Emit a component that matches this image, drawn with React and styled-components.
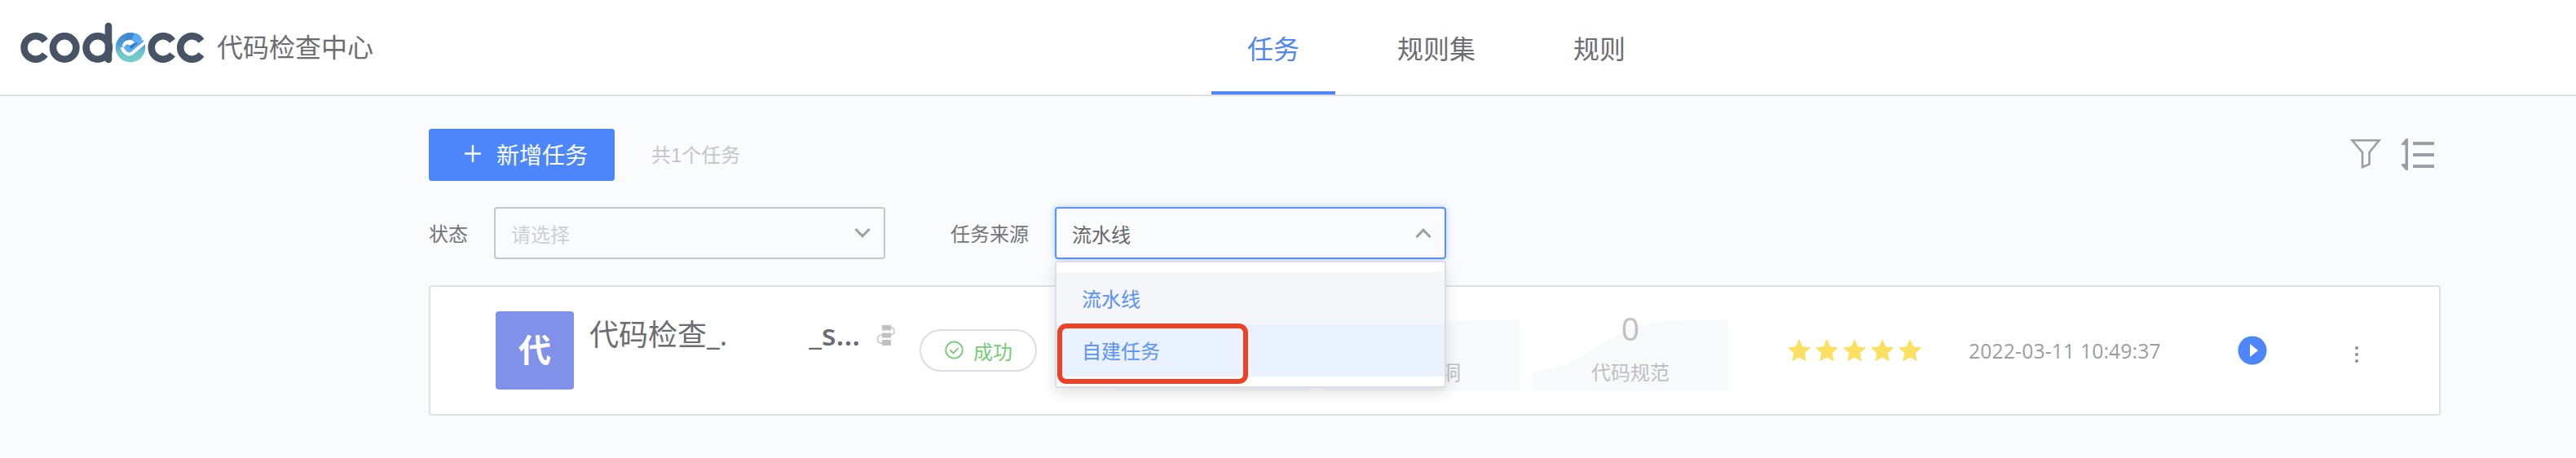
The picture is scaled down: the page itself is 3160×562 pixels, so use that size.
import React from "react";
import styled, { createGlobalStyle } from "styled-components";

const Global = createGlobalStyle`
  * { box-sizing: border-box; }
  body {
    margin: 0;
    background: #fafbfd;
    color: #737479;
    font-family: "Liberation Sans", "Noto Sans CJK SC", sans-serif;
    font-size: 24px;
  }
  svg { display: block; flex: none; }
`;

const latin = `"Open Sans", "Noto Sans CJK SC", sans-serif`;

const Page = styled.div`
  height: 562px;
  overflow: hidden;
`;

const Header = styled.header`
  display: grid;
  grid-template-columns: 1486px auto;
  height: 118px;
  background: #fff;
  border-bottom: 2px solid #dfe0e6;
`;

const Brand = styled.div`
  display: flex;
  align-items: center;
  gap: 16px;
  padding-left: 24px;

  > svg { margin-bottom: 10px; }
`;

const BrandName = styled.span`
  padding-top: 2px;
  font-size: 32px;
  line-height: 48px;
  color: #6c6d73;
`;

const Tabs = styled.nav`
  display: flex;
  gap: 32px;
`;

const Tab = styled.a`
  height: 116px;
  padding: 0 44px;
  font-size: 32px;
  line-height: 122px;
  color: ${(p) => (p.$active ? "#4d86fb" : "#6c6d73")};
  box-shadow: ${(p) => (p.$active ? "inset 0 -4px #4d86fb" : "none")};
`;

const Content = styled.main`
  width: 2468px;
  margin-left: 526px;
  padding-top: 40px;
`;

const Toolbar = styled.div`
  display: flex;
  align-items: center;
  height: 64px;
`;

const AddButton = styled.button`
  display: flex;
  align-items: center;
  gap: 19px;
  width: 228px;
  height: 64px;
  padding: 0 0 2px 44px;
  border: 0;
  border-radius: 4px;
  background: #4d86fb;
  color: #fff;
  font-family: inherit;
  font-size: 28px;
`;

const Total = styled.span`
  margin-left: 45px;
  padding-bottom: 3px;
  color: #c4c5ca;
`;

const ToolIcons = styled.div`
  display: flex;
  gap: 24px;
  margin-left: auto;
  padding-right: 7px;
`;

const Filters = styled.div`
  display: flex;
  align-items: center;
  height: 64px;
  margin-top: 32px;
`;

const Label = styled.label`
  width: ${(p) => p.$width}px;
  margin-left: ${(p) => p.$offset || 0}px;
  padding-top: 3px;
  line-height: 36px;
`;

const SelectBox = styled.div`
  position: relative;
  display: flex;
  align-items: center;
  justify-content: space-between;
  width: 480px;
  height: 64px;
  padding: 0 16px 0 19px;
  border: 2px solid ${(p) => (p.$open ? "#5a91fc" : "#c4c6cc")};
  border-radius: 4px;
  box-shadow: ${(p) => (p.$open ? "0 0 8px rgba(77, 134, 251, 0.4)" : "none")};
  color: ${(p) => (p.$placeholder ? "#c8d1da" : "#66686f")};
`;

const Menu = styled.ul`
  position: absolute;
  z-index: 2;
  top: 64px;
  left: -2px;
  width: 480px;
  height: 156px;
  margin: 0;
  padding: 12px 0;
  list-style: none;
  background: #fff;
  border: 2px solid #dcdee5;
  border-radius: 4px;
  box-shadow: 0 6px 18px rgba(0, 0, 0, 0.13);
`;

const Option = styled.li`
  height: 64px;
  padding-left: 31px;
  line-height: 67px;
  color: #5a91fb;
  background: ${(p) => (p.$hover ? "#eaf2ff" : "#f4f6fa")};
`;

const Marker = styled.div`
  position: absolute;
  top: 75px;
  left: 1px;
  width: 234px;
  height: 74px;
  border: 6px solid #ee4126;
  border-radius: 11px;
`;

const Card = styled.section`
  display: flex;
  align-items: center;
  height: 160px;
  margin-top: 32px;
  padding-left: 80px;
  background: #fff;
  border: 2px solid #dfe0e6;
  border-radius: 4px;
`;

const Avatar = styled.div`
  width: 96px;
  height: 96px;
  border-radius: 4px;
  background: #8091ea;
  color: #fff;
  font-size: 40px;
  font-weight: 700;
  line-height: 97px;
  text-align: center;
`;

const TaskName = styled.div`
  display: flex;
  align-items: baseline;
  width: 352px;
  height: 96px;
  padding-left: 19px;
  font-family: ${latin};
  font-size: 36px;
  line-height: 58px;
  color: #6c6d73;
`;

const NameTail = styled.span`
  margin-left: 100px;
`;

const NameSuffix = styled.span`
  font-weight: 600;
`;

const SourceIcon = styled.div`
  height: 96px;
  width: 72px;
  padding: 15px 0 0 19px;
`;

const Status = styled.div`
  display: flex;
  align-items: center;
  gap: 12px;
  width: 144px;
  height: 52px;
  margin-right: 96px;
  padding-left: 29px;
  border: 2px solid #dcdee5;
  border-radius: 26px;
  color: #74cd74;
`;

const Metrics = styled.div`
  display: flex;
  gap: 16px;
`;

const Metric = styled.div`
  display: grid;
  width: 240px;
  height: 100px;
  text-align: center;
  color: #bfbfc2;

  > * { grid-area: 1 / 1; }
  > svg { align-self: end; }
`;

const MetricText = styled.div`
  z-index: 1;
`;

const MetricValue = styled.div`
  height: 60px;
  font-family: ${latin};
  font-size: 39px;
  line-height: 46px;
`;

const MetricLabel = styled.div`
  line-height: 36px;
`;

const Stars = styled.div`
  display: flex;
  gap: 6px;
  margin-left: 73px;
`;

const Time = styled.time`
  width: 330px;
  margin-left: 58px;
  font-family: ${latin};
  font-size: 24.6px;
  letter-spacing: 0.2px;
  white-space: nowrap;
  color: #9c9da1;
`;

const More = styled.div`
  margin-left: 107px;
  padding-top: 9px;
`;

const Chevron = ({ up }) => (
  <svg width="20" height="14" viewBox="0 0 20 14" fill="none" stroke="#9c9ea5" strokeWidth="3">
    <path d={up ? "M1.5 12 10 3.2 18.5 12" : "M1.5 2 10 10.8 18.5 2"} />
  </svg>
);

const Logo = () => (
  <svg width="226" height="54" viewBox="24 26 226 54" fill="none" role="img" aria-label="codecc">
    <defs>
      <linearGradient id="ring" x1="0" y1="0" x2="0" y2="1">
        <stop offset="0" stopColor="#4189cf" />
        <stop offset=".4" stopColor="#4b9ddb" />
        <stop offset=".65" stopColor="#6cc4cb" />
        <stop offset="1" stopColor="#7bd0cd" />
      </linearGradient>
    </defs>
    <g stroke="#465465" strokeWidth="8.6">
      <path d="M55.300 50.2A14.2 14.2 0 1 0 55.300 66.8" />
      <circle cx="79.2" cy="58.5" r="14.2" />
      <circle cx="119.8" cy="58.5" r="14.2" />
      <path d="M133 32V73" strokeLinecap="round" />
      <path d="M211.5 50.2A14.2 14.2 0 1 0 211.5 66.8" />
      <path d="M247 50.2A14.2 14.2 0 1 0 247 66.8" />
    </g>
    <circle cx="160" cy="58.3" r="18.2" fill="url(#ring)" />
    <path fill="#fff" d="M180 46 174 50 159 64 150 56Q152 48 161 48.5L170 47V40H180Z" />
    <path fill="#4189cf" d="M157 41 168 42 166 51Q161 47 155 50L152 44Z" />
    <path fill="#58abf8" d="M165 41Q170 41 173.5 46Q175 49 172 52L161 63Q159 65 157 63L152 57.5 156 54 159.5 56 165 52 161.5 49Z" />
    <path d="M160 57 168 53 161 58.5Z" stroke="#347abf" strokeWidth="2" fill="#347abf" />
    <path d="M149.5 58 151 61.5Q156.5 69.5 162.5 65L180 50" stroke="#fff" strokeWidth="4" />
  </svg>
);

const Curve = () => (
  <svg width="240" height="88" viewBox="0 0 240 88">
    <path fill="#f7f9fb" d="M0 65Q24 61 46 53Q58 48 76 35L108 17Q140 0 200 0H240V88H0Z" />
  </svg>
);

const metrics = [
  { name: "代码缺陷", value: "0" },
  { name: "安全漏洞", value: "0" },
  { name: "代码规范", value: "0" },
];

export default function App() {
  return (
    <Page>
      <Global />
      <Header>
        <Brand>
          <Logo />
          <BrandName>代码检查中心</BrandName>
        </Brand>
        <Tabs>
          <Tab $active>任务</Tab>
          <Tab>规则集</Tab>
          <Tab>规则</Tab>
        </Tabs>
      </Header>
      <Content>
        <Toolbar>
          <AddButton>
            <svg width="20" height="22" viewBox="0 0 20 22" stroke="#fff" strokeWidth="2.4">
              <path d="M10 0V21M0 10.5H20" />
            </svg>
            新增任务
          </AddButton>
          <Total>共1个任务</Total>
          <ToolIcons>
            <svg width="38" height="40" viewBox="0 0 38 40" fill="none" stroke="#9c9ea5" strokeWidth="2.6">
              <path d="M2.5 2.3H35.5L23.5 17V31.5L15 35V17Z" />
            </svg>
            <svg width="42" height="40" viewBox="0 0 42 40">
              <path fill="#9c9ea5" d="M9 0V39H6.5L1 33V31H5.5V8H1V6.5L6.5 0ZM15 4H41V8H15ZM15 18H41V22H15ZM15 32H41V36H15Z" />
            </svg>
          </ToolIcons>
        </Toolbar>
        <Filters>
          <Label $width={80}>状态</Label>
          <SelectBox $placeholder>
            请选择
            <Chevron />
          </SelectBox>
          <Label $width={128} $offset={80}>任务来源</Label>
          <SelectBox $open>
            流水线
            <Chevron up />
            <Menu>
              <Option>流水线</Option>
              <Option $hover>自建任务</Option>
              <Marker />
            </Menu>
          </SelectBox>
        </Filters>
        <Card>
          <Avatar>代</Avatar>
          <TaskName>
            代码检查_.
            <NameTail>_</NameTail>
            <NameSuffix>s...</NameSuffix>
          </TaskName>
          <SourceIcon>
            <svg width="24" height="28" viewBox="0 0 24 28" fill="none" stroke="#cfd0d5" strokeWidth="1.8">
              <path d="M16 5H18Q22 5 22 9.5T17 14H6Q1.5 14 1.5 19T6 24H8" />
              <path fill="#c0c1c7" stroke="none" d="M7 2H18V8.500H7ZM7 11.500H18V17.500H7ZM7 20H18V27H7Z" />
            </svg>
          </SourceIcon>
          <Status>
            <svg width="23" height="24" viewBox="0 0 23 24" fill="none" stroke="#74cd74" strokeWidth="1.8">
              <circle cx="11.5" cy="11.5" r="10.2" />
              <path d="M6.500 11.500 10.500 15.500 16.500 9" />
            </svg>
            成功
          </Status>
          <Metrics>
            {metrics.map((m) => (
              <Metric key={m.name}>
                <Curve />
                <MetricText>
                  <MetricValue>{m.value}</MetricValue>
                  <MetricLabel>{m.name}</MetricLabel>
                </MetricText>
              </Metric>
            ))}
          </Metrics>
          <Stars>
            {[1, 2, 3, 4, 5].map((n) => (
              <svg key={n} width="28" height="28" viewBox="0 0 28 28">
                <path fill="#fce062" d="M14 0 18.2 9.2 28 10.4 20.8 17.2 22.6 27.4 14 22.4 5.4 27.4 7.2 17.2 0 10.4 9.8 9.2Z" />
              </svg>
            ))}
          </Stars>
          <Time>2022-03-11 10:49:37</Time>
          <svg width="36" height="36" viewBox="0 0 36 36">
            <circle cx="18" cy="18" r="17.6" fill="#4d86fb" />
            <path fill="#fff" d="M15 10 25 18 15 26Z" />
          </svg>
          <More>
            <svg width="6" height="22" viewBox="0 0 6 22" fill="#8c8e95">
              <circle cx="3" cy="3" r="2" />
              <circle cx="3" cy="11" r="2" />
              <circle cx="3" cy="19" r="2" />
            </svg>
          </More>
        </Card>
      </Content>
    </Page>
  );
}
